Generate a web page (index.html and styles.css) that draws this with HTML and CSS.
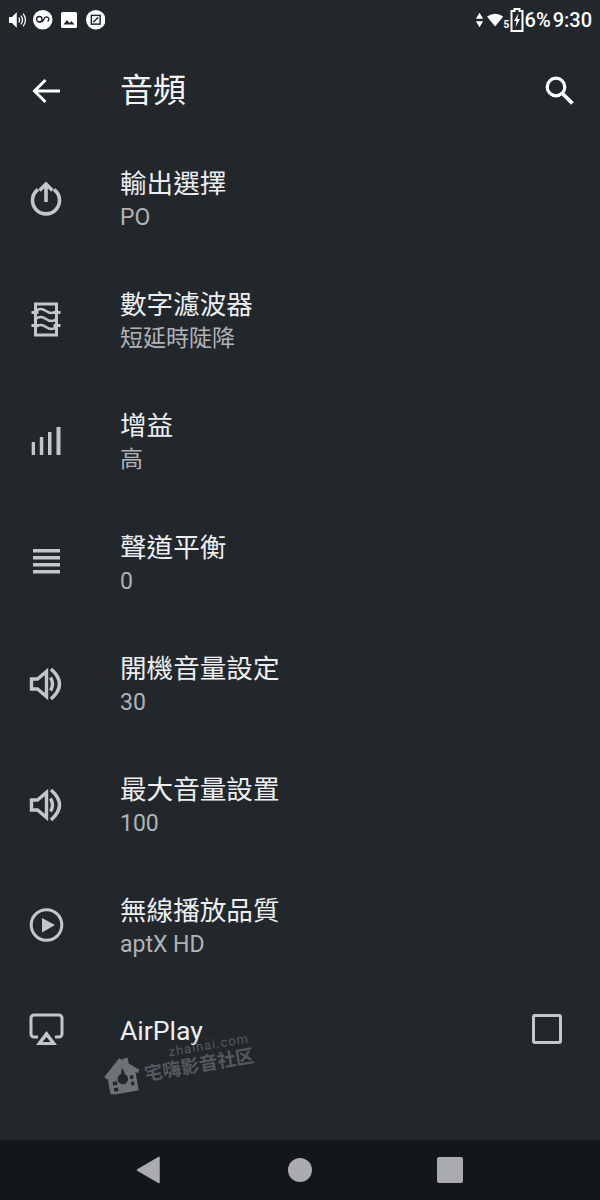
FILE: index.html
```html
<!DOCTYPE html>
<html lang="zh-TW">

<head>
    <meta charset="UTF-8">
    <meta name="viewport" content="width=device-width, initial-scale=1.0">
    <title>音頻</title>
    <link rel="stylesheet" href="styles.css">
</head>

<body>
    <div class="screen">
        <!-- status bar -->
        <div class="status-bar">
            <div class="status-left">
                <svg class="st-sound" viewBox="0 0 18 18"><path d="M0 6h3l5-5v16l-5-5H0z" fill="#fff"/><path d="M10 6.500q1.800 2.500 0 5M12.300 4.500q3.200 4.500 0 9M14.600 2.500q4.600 6.500 0 13" fill="none" stroke="#fff" stroke-width="1.300"/></svg>
                <svg class="st-circle" viewBox="0 0 20 20"><circle cx="10" cy="10" r="10" fill="#fff"/><circle cx="6.500" cy="9.500" r="2.800" fill="none" stroke="#22272c" stroke-width="1.400"/><path d="M6.500 12.300c3 0 4-1 4.500-2.500s1.500-3 3.500-2.500 2.500 3 .5 4.500" fill="none" stroke="#22272c" stroke-width="1.400"/></svg>
                <svg class="st-photo" viewBox="0 0 16 16"><rect width="16" height="16" rx="1.500" fill="#fff"/><path d="M2.500 12.500l3.500-4.500 2.500 3 2-2 3 3.500z" fill="#22272c"/></svg>
                <svg class="st-circle" viewBox="0 0 20 20"><circle cx="10" cy="10" r="10" fill="#fff"/><rect x="5.500" y="5.500" width="9" height="9" fill="none" stroke="#22272c" stroke-width="1.500"/><path d="M7.500 12.500l5-5" stroke="#22272c" stroke-width="1.500"/></svg>
            </div>
            <div class="status-right">
                <svg class="st-data" viewBox="0 0 10 18"><path d="M5 1l4 6.500H1zM5 17l-4-6.500h8z" fill="#fff"/></svg>
                <svg class="st-wifi" viewBox="0 0 20 16"><path d="M0 4Q9-2.500 18 4L9 15z" fill="#fff"/></svg>
                <span class="st-five">5</span>
                <svg class="st-battery" viewBox="0 0 14 24"><path d="M4.500 1h5v2h3v20h-11V3h3z" fill="none" stroke="#fff" stroke-width="2"/><path d="M8.500 5.500L4 13h2.500l-1 6L10 11H7.500z" fill="#fff"/></svg>
                <span class="st-text">6%</span>
                <span class="st-text st-clock">9:30</span>
            </div>
        </div>

        <!-- toolbar -->
        <div class="toolbar">
            <svg class="tb-back" viewBox="0 0 28 26"><path d="M13.500 2L2.500 13l11 11M3 13h25" fill="none" stroke="#fff" stroke-width="3"/></svg>
            <h1 class="tb-title">音頻</h1>
            <svg class="tb-search" viewBox="0 0 30 30"><circle cx="12" cy="12" r="8.800" fill="none" stroke="#fff" stroke-width="3.200"/><path d="M18 18l10.500 10.500" stroke="#fff" stroke-width="3.800"/></svg>
        </div>

        <!-- settings -->
        <div class="list">
            <div class="row">
                <svg class="row-icon" viewBox="0 0 36 36"><path d="M10 8.500A13.500 13.500 0 1 0 26 8.500" fill="none" stroke="#c4c7ca" stroke-width="3.600"/><path d="M18 21V4M11.500 9.500L18 3l6.500 6.500" fill="none" stroke="#c4c7ca" stroke-width="3.600"/></svg>
                <div class="row-text">
                    <div class="row-title">輸出選擇</div>
                    <div class="row-sub">PO</div>
                </div>
            </div>
            <div class="row">
                <svg class="row-icon" viewBox="0 0 36 36"><path d="M7.500 2h21v31h-21zM3.500 10.500h7M25.500 10.500h7M3.500 23.500h7M25.500 23.500h7" fill="none" stroke="#c4c7ca" stroke-width="3"/><path d="M7.500 9q5-4 10.500 0t10.500 0M7.500 17q5-4 10.500 0t10.500 0M7.500 25q5-4 10.500 0t10.500 0" fill="none" stroke="#c4c7ca" stroke-width="2.400"/></svg>
                <div class="row-text">
                    <div class="row-title">數字濾波器</div>
                    <div class="row-sub">短延時陡降</div>
                </div>
            </div>
            <div class="row">
                <svg class="row-icon" viewBox="0 0 36 36"><path d="M3.700 19H7v13H3.700zM11.800 14h3.500v18h-3.500zM20 9h3.500v23H20zM28.500 4H32.500v28h-4z" fill="#c4c7ca"/></svg>
                <div class="row-text">
                    <div class="row-title">增益</div>
                    <div class="row-sub">高</div>
                </div>
            </div>
            <div class="row">
                <svg class="row-icon" viewBox="0 0 36 36"><path d="M5 4h27v3.500H5zM5 11h27v3.500H5zM5 18h27v3.500H5zM5 25h27v3.500H5z" fill="#c4c7ca"/></svg>
                <div class="row-text">
                    <div class="row-title">聲道平衡</div>
                    <div class="row-sub">0</div>
                </div>
            </div>
            <div class="row">
                <svg class="row-icon" viewBox="0 0 36 36"><path d="M3.500 13h6l9-7.500v25l-9-7.500h-6z" fill="none" stroke="#c4c7ca" stroke-width="3.400"/><path d="M22.500 11.500q4 6.500 0 13" fill="none" stroke="#c4c7ca" stroke-width="3.400"/><path d="M23 3q17 15 0 30" fill="none" stroke="#c4c7ca" stroke-width="3.600"/></svg>
                <div class="row-text">
                    <div class="row-title">開機音量設定</div>
                    <div class="row-sub">30</div>
                </div>
            </div>
            <div class="row">
                <svg class="row-icon" viewBox="0 0 36 36"><path d="M3.500 13h6l9-7.500v25l-9-7.500h-6z" fill="none" stroke="#c4c7ca" stroke-width="3.400"/><path d="M22.500 11.500q4 6.500 0 13" fill="none" stroke="#c4c7ca" stroke-width="3.400"/><path d="M23 3q17 15 0 30" fill="none" stroke="#c4c7ca" stroke-width="3.600"/></svg>
                <div class="row-text">
                    <div class="row-title">最大音量設置</div>
                    <div class="row-sub">100</div>
                </div>
            </div>
            <div class="row">
                <svg class="row-icon" viewBox="0 0 36 36"><circle cx="18.500" cy="17" r="15.300" fill="none" stroke="#c4c7ca" stroke-width="3"/><path d="M14 10l13 7-13 7.500z" fill="#c4c7ca"/></svg>
                <div class="row-text">
                    <div class="row-title">無線播放品質</div>
                    <div class="row-sub">aptX HD</div>
                </div>
            </div>
            <div class="row row-last">
                <svg class="row-icon" viewBox="0 0 36 36"><path d="M10 25H6a3 3 0 0 1-3-3V6a3 3 0 0 1 3-3h25a3 3 0 0 1 3 3v16a3 3 0 0 1-3 3h-4" fill="none" stroke="#c4c7ca" stroke-width="3"/><path d="M18.500 19L29 33H8zM18.500 25L14.500 30h8z" fill="#c4c7ca" fill-rule="evenodd"/></svg>
                <div class="row-text">
                    <div class="row-title">AirPlay</div>
                </div>
                <div class="checkbox"></div>
            </div>
        </div>

        <!-- watermark -->
        <div class="watermark">
            <svg class="wm-logo" viewBox="0 0 36 36"><path d="M18 1l3 2.500V2h5v5.500L35 15l-2 3-2-1.500V34H8l-4-1V18l-1 1-2-3z" fill="#6f7275"/><circle cx="18" cy="21" r="5" fill="#22272c"/><path d="M19 10l2 6-4 1zM8 22h4v3.500H8zM8 28h4v3.500H8zM25 19h3v3.500h-3zM25 25h3v3.500h-3z" fill="#22272c"/></svg>
            <div class="wm-text">
                <div class="wm-url">zhaihai.com</div>
                <div class="wm-name">宅嗨影音社区</div>
            </div>
        </div>

        <!-- nav bar -->
        <div class="nav-bar">
            <svg class="nav-back" viewBox="0 0 24 28"><path d="M1.500 14L23 1.500v25z" fill="#a9abae" stroke="#a9abae" stroke-width="1.500" stroke-linejoin="round"/></svg>
            <div class="nav-home"></div>
            <div class="nav-recent"></div>
        </div>
    </div>
</body>

</html>
```

FILE: styles.css
```css
* {
    box-sizing: border-box;
}

html,
body {
    margin: 0;
    padding: 0;
}

body {
    font-family: Roboto, "Noto Sans CJK TC", sans-serif;
    background: #22272c;
}

.screen {
    position: relative;
    width: 600px;
    height: 1200px;
    overflow: hidden;
    background: #22272c;
    display: flex;
    flex-direction: column;
}

/* status bar */
.status-bar {
    height: 40px;
    padding: 0 8px 0 9px;
    display: flex;
    justify-content: space-between;
    align-items: center;
    color: #fff;
}

.status-left,
.status-right {
    display: flex;
    align-items: center;
}

.status-left {
    gap: 6.5px;
}

.st-sound {
    width: 17.5px;
    height: 18px;
}

.st-circle {
    width: 19.5px;
    height: 19.5px;
}

.st-photo {
    width: 16px;
    height: 16px;
    margin: 0 2px;
}

.st-data {
    width: 9px;
    height: 18px;
    margin-right: 3px;
}

.st-wifi {
    width: 18px;
    height: 14.4px;
}

.st-five {
    font-size: 10px;
    font-weight: 700;
    width: 6px;
    margin: 8px 0 0 -1px;
}

.st-battery {
    width: 14px;
    height: 24px;
    margin-right: 1px;
}

.st-text {
    font-size: 20px;
    line-height: 24px;
    font-weight: 500;
}

.st-clock {
    margin-left: 2px;
}

/* toolbar */
.toolbar {
    height: 98px;
    padding: 0 26px 0 32px;
    display: flex;
    align-items: center;
    border-bottom: 1px solid #20252a;
}

.tb-back {
    width: 28px;
    height: 26px;
    margin-top: 4px;
}

.tb-title {
    margin: 4px 0 0 60px;
    flex: 1;
    font-size: 33px;
    font-weight: 400;
    line-height: 44px;
    color: #f2f3f4;
}

.tb-search {
    width: 30px;
    height: 30px;
    margin-top: 2px;
}

/* settings */
.list {
    flex: 1;
}

.row {
    height: 121.3px;
    padding: 0 38px 0 28px;
    display: flex;
    align-items: center;
}

.row-last {
    height: 86px;
}

.row-icon {
    width: 36px;
    height: 36px;
    flex: none;
}

.row-text {
    flex: 1;
    margin: 2px 0 0 56px;
}

.row-title {
    font-size: 26.6px;
    line-height: 36px;
    color: #eceef0;
}

.row-sub {
    font-size: 23px;
    line-height: 32px;
    color: #b0b3b7;
}

.checkbox {
    width: 30px;
    height: 30px;
    border: 3px solid #c4c7ca;
    border-radius: 3px;
    margin-bottom: 2px;
}

/* watermark */
.watermark {
    position: absolute;
    left: 106px;
    top: 1056px;
    display: flex;
    align-items: flex-end;
    gap: 3px;
    transform: rotate(-10deg);
    transform-origin: left bottom;
    color: #55595d;
}

.wm-logo {
    width: 38px;
    height: 38px;
    margin-bottom: -5px;
}

.wm-url {
    font-size: 13px;
    line-height: 15px;
    letter-spacing: 1px;
    text-align: right;
    margin-right: 2px;
}

.wm-name {
    font-size: 18.5px;
    line-height: 22px;
    font-weight: 700;
}

/* nav bar */
.nav-bar {
    height: 60px;
    background: #13171a;
    display: flex;
    align-items: center;
    justify-content: center;
    padding-right: 2px;
    flex: none;
}

.nav-back {
    width: 24px;
    height: 28px;
    margin-right: 128px;
}

.nav-home {
    width: 24px;
    height: 24px;
    border-radius: 50%;
    background: #a9abae;
    margin-right: 125px;
}

.nav-recent {
    width: 26px;
    height: 26px;
    border-radius: 2px;
    background: #a9abae;
}
```
